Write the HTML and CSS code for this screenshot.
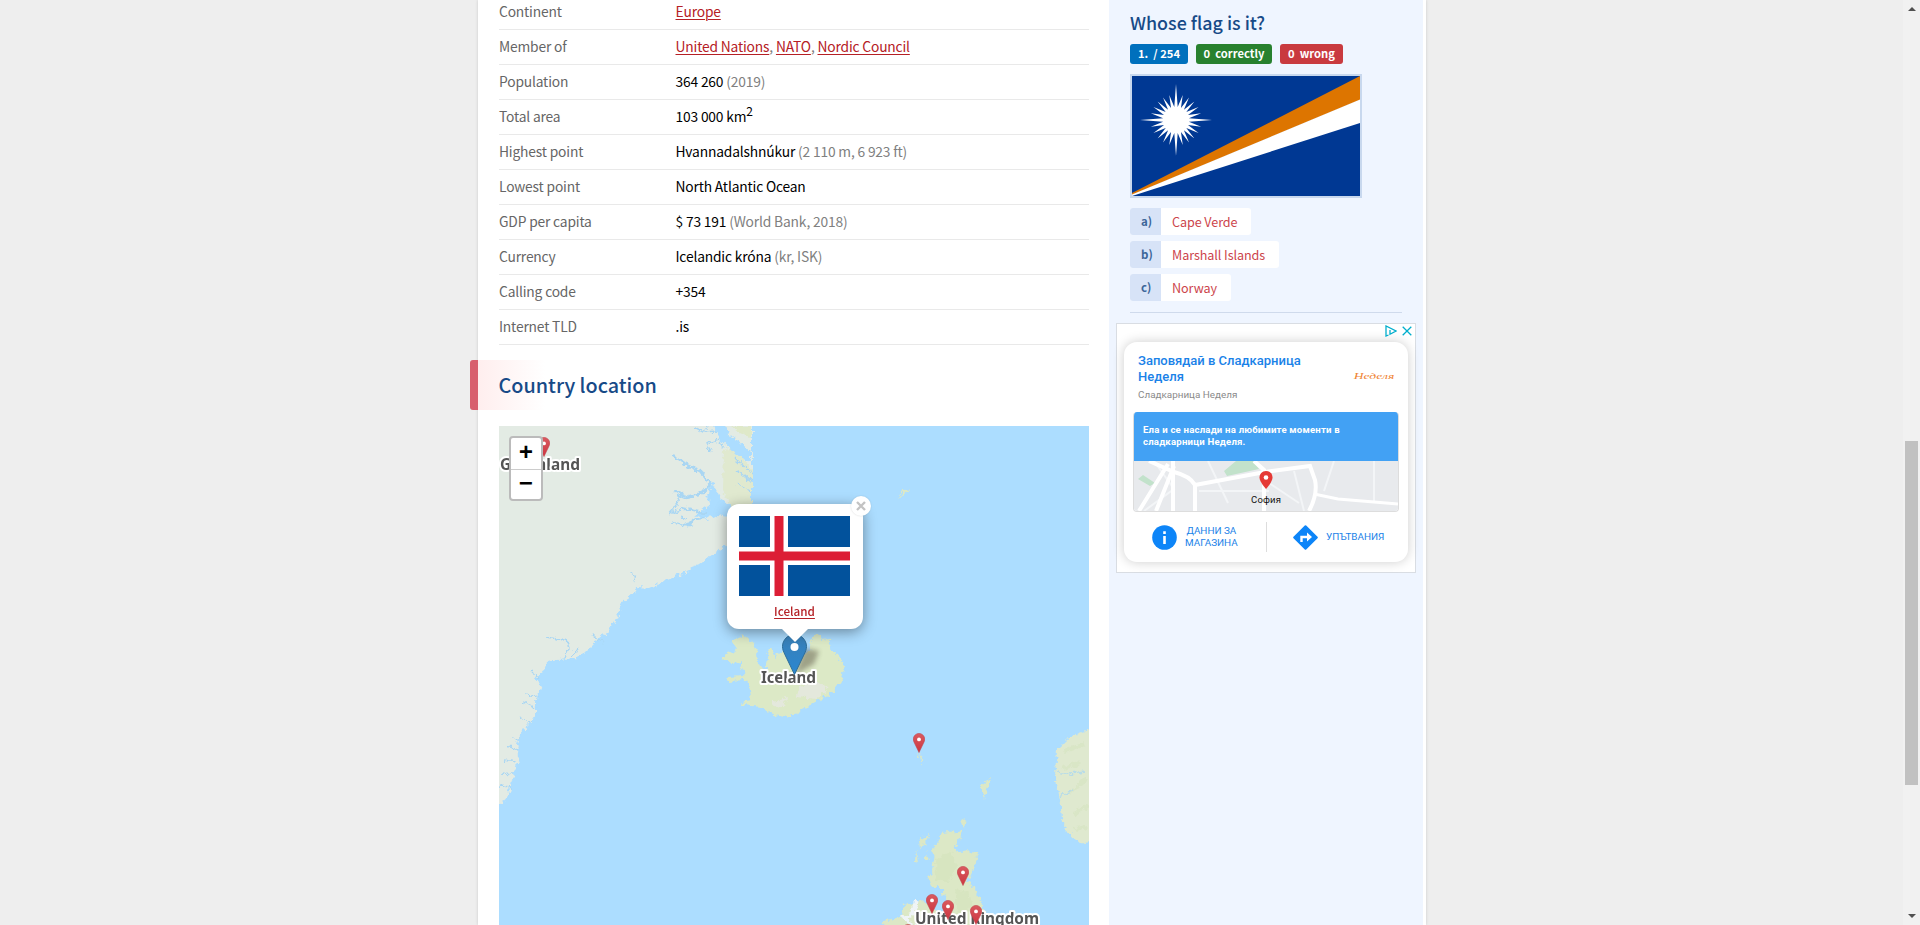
FILE: index.html
```html
<!DOCTYPE html>
<html lang="en">
<head>
<meta charset="utf-8">
<title>Iceland - country facts</title>
<link rel="stylesheet" href="styles.css">
</head>
<body>
<svg class="defs" width="0" height="0" aria-hidden="true">
  <defs>
    <linearGradient id="redpin" x1="0" y1="0" x2="0" y2="1"><stop offset="0" stop-color="#d95a60"/><stop offset="1" stop-color="#cc3540"/></linearGradient>
    <linearGradient id="bluepin" x1="0" y1="0" x2="0" y2="1"><stop offset="0" stop-color="#3a7fb5"/><stop offset="1" stop-color="#2a87d2"/></linearGradient>
    <symbol id="pin" viewBox="0 0 25 41"><path d="M12.5.5C5.9.5.5 5.9.5 12.5c0 2.8.9 4.8 2.2 7.6L12.5 40.5l9.8-20.4c1.300-2.800 2.200-4.800 2.200-7.600C24.500 5.900 19.100.5 12.500.5z"/><circle cx="12.500" cy="13" r="4" fill="#fff" stroke="none"/></symbol>
    <filter id="coast" x="-5%" y="-5%" width="110%" height="110%" color-interpolation-filters="sRGB"><feTurbulence type="fractalNoise" baseFrequency=".2" numOctaves="3" seed="4" result="n"/><feDisplacementMap in="SourceGraphic" in2="n" scale="8" xChannelSelector="R" yChannelSelector="G"/></filter>
    <filter id="shade" x="-40%" y="-40%" width="180%" height="180%"><feGaussianBlur stdDeviation="2.500"/></filter>
  </defs>
</svg>
<div class="window">
<div class="page">
  <main class="main">
    <dl class="facts">
      <div class="row"><dt>Continent</dt><dd><a>Europe</a></dd></div>
      <div class="row"><dt>Member of</dt><dd class="muted"><a>United Nations</a>, <a>NATO</a>, <a>Nordic Council</a></dd></div>
      <div class="row"><dt>Population</dt><dd>364 260 <span>(2019)</span></dd></div>
      <div class="row"><dt>Total area</dt><dd>103 000 km<sup>2</sup></dd></div>
      <div class="row"><dt>Highest point</dt><dd>Hvannadalshnúkur <span>(2 110 m, 6 923 ft)</span></dd></div>
      <div class="row"><dt>Lowest point</dt><dd>North Atlantic Ocean</dd></div>
      <div class="row"><dt>GDP per capita</dt><dd>$ 73 191 <span>(World Bank, 2018)</span></dd></div>
      <div class="row"><dt>Currency</dt><dd>Icelandic króna <span>(kr, ISK)</span></dd></div>
      <div class="row"><dt>Calling code</dt><dd>+354</dd></div>
      <div class="row"><dt>Internet TLD</dt><dd>.is</dd></div>
    </dl>
    <h2 class="section">Country location</h2>
    <div class="map">
      <svg class="tiles" viewBox="499 426 590 499">
        <rect x="499" y="426" width="590" height="499" fill="#acddff"/>
        <g filter="url(#coast)">
          <path fill="#e3ebe4" d="M480 410H752V516L727 545 705 560 690 570 663 582 650 588 638 587 633 594 622 603 617 618 607 633 593 643 578 658 565 659 547 662 543 673 535 678 541 688 536 700 536 715 520 735 517 743 519 757 512 780 507 798 499 804 480 810z"/>
          <path fill="#dfe9c9" opacity=".8" d="M723 450L735 448 752 470V516H738L722 490z"/>
          <path fill="#dfe9c9" d="M732 426H751V438L742 433z"/>
          <path fill="#acddff" d="M714 420L718 438 736 455 751 463V452L744 446 728 434 724 420zM710 483L716 486 722 500 732 505 728 517 718 515 706 519 696 514 710 505 708 494z"/>
          <g fill="none" stroke="#a9d6f3" stroke-width="1.400">
            <path d="M673 455L684 464 700 471 710 484M710 484L702 493 686 497 675 492M706 514L690 510 680 508M704 518L693 519 687 527" stroke-width="2.600"/>
            <path d="M684 464L678 458M681 494L677 504 669 514M682 509L670 513M692 526L672 522M687 519L680 517M694 427L704 432 717 431M704 432L708 425M718 440L706 444 711 452M718 440L724 448M738 470L752 482M738 484L752 492M735 458L752 474M632 572L635 582M567 640L569 650 566 658M547 637L569 641M578 648L571 657M593 634L603 643M532 672L540 678M526 695L538 698M523 702L536 708M521 718L530 723M510 737L519 738M508 746L518 750M504 760L516 762M502 773L514 774M500 786L511 787"/>
          </g>
          <path fill="#dce9c6" d="M736 637L743 635 753 643 757 653 758 663 765 672 768 650 771 647 775 657 782 650 791 660 810 652 812 638 817 633 822 640 833 638 828 647 838 655 844 667 842 680 833 692 810 705 797 713 787 717 773 715 762 707 742 705 743 701 752 700 750 690 747 680 726 681 727 677 744 676 745 670 740 669 743 662 730 663 722 660 725 655 737 650 732 643z"/>
          <path fill="#e5e8df" opacity=".85" d="M800 686L818 681 828 687 817 699 796 697zM772 702L786 698 784 707 775 708z"/>
          <path fill="#dce8c6" d="M942 833L964 830 960 838 955 847 958 852 977 851 978 855 972 873 967 882 975 887 981 900 985 913 992 930 940 930 950 913 948 900 943 893 943 887 932 887 928 877 932 873 933 863 935 857 932 850 938 843zM903 905L914 902 924 900 934 908 940 920 938 930 882 930 886 920 903 917 902 910z"/>
          <path fill="#d4e3bd" opacity=".65" d="M935 860L950 850 957 866 948 882 936 880zM955 890L968 892 973 908 958 913z"/>
          <path fill="#dce8c6" d="M919 840L929 833 926 844 920 848zM916 850L918 862 915 861zM925 852L930 860 925 860zM961 820L968 819 964 827zM981 786L991 779 986 792 984 800 981 793zM919 752L922 758 922 765zM897 498L904 490 910 489 903 495z"/>
          <path fill="#dfe9cf" d="M1100 726L1080 732 1067 740 1057 750 1055 773 1060 800 1063 817 1065 830 1077 840 1085 844 1100 841z"/>
          <path fill="none" stroke="#d3e4bd" stroke-width="4" opacity=".5" d="M1064 751L1084 744M1064 768L1080 762M1070 794L1087 777M1073 815L1088 805M1075 830L1087 827"/>
          <path fill="none" stroke="#b8dce8" stroke-width="1.500" d="M1057 772L1070 774 1086 772M1060 796L1074 790"/>
          <path fill="none" stroke="#eff4f7" stroke-width="3" d="M915 900L913 914 904 918 914 925"/>
        </g>
        <path filter="url(#shade)" fill="#4a4030" opacity=".42" d="M795 675L804 648 819 651 814 664z"/>
        <g class="place">
          <text x="500" y="470" textLength="80">Greenland</text>
          <text x="761" y="683" textLength="55">Iceland</text>
          <text x="915" y="924" textLength="124">United Kingdom</text>
        </g>
        <g fill="url(#redpin)" stroke="#bd3e48">
          <use href="#pin" x="538" y="437" width="12" height="20"/>
          <use href="#pin" x="913" y="733" width="12" height="20"/>
          <use href="#pin" x="957" y="866" width="12" height="20"/>
          <use href="#pin" x="926" y="894" width="12" height="20"/>
          <use href="#pin" x="942" y="900" width="12" height="20"/>
          <use href="#pin" x="970" y="905" width="12" height="20"/>
          <use href="#pin" x="902" y="924" width="12" height="20"/>
        </g>
        <use href="#pin" x="782" y="634" width="25" height="41" fill="url(#bluepin)" stroke="#2e6c97"/>
      </svg>
      <div class="zoomctl"><span>+</span><span>−</span></div>
      <div class="popup">
        <svg class="iceflag" viewBox="0 0 111 80"><path fill="#02529c" d="M0 0h111v80H0z"/><path stroke="#fff" stroke-width="18" d="M40 0v80M0 40h111"/><path stroke="#dc1e35" stroke-width="9" d="M40 0v80M0 40h111"/></svg>
        <a>Iceland</a>
        <span class="close"><svg width="10" height="10" viewBox="0 0 10 10"><path d="M1 1l8 8M9 1L1 9" stroke="#c3c3c3" stroke-width="2.400"/></svg></span>
      </div>
    </div>
  </main>
  <aside class="side">
    <h3>Whose flag is it?</h3>
    <div class="score"><b class="b1">1.&nbsp; / 254</b><b class="b2">0&nbsp; correctly</b><b class="b3">0&nbsp; wrong</b></div>
    <svg class="quizflag" viewBox="0 0 228 120"><path fill="#003893" d="M0 0h228v120H0z"/><path fill="#dd7500" d="M0 117L228 0v24L0 119z"/><path fill="#fff" d="M0 118.500L228 23.500V47L0 120z"/><path class="star" fill="#fff" d=""/></svg>
    <ul class="answers">
      <li class="a1"><i>a)</i><span>Cape Verde</span></li>
      <li class="a2"><i>b)</i><span>Marshall Islands</span></li>
      <li class="a3"><i>c)</i><span>Norway</span></li>
    </ul>
    <div class="ad">
      <div class="adchoices">
        <svg width="12" height="12" viewBox="0 0 12 12" fill="none" stroke="#00aecd" stroke-width="1.300"><path d="M3.500 10L1 11V1l10 5-6 3.200V5M5 2.800v1.200"/></svg>
        <svg width="10" height="10" viewBox="0 0 10 10" stroke="#00aecd" stroke-width="1.300"><path d="M.7.7l8.600 8.600M9.300.7L.7 9.300"/></svg>
      </div>
      <div class="card">
        <div class="cardhead">
          <div><h4>Заповядай в Сладкарница<br>Неделя</h4><p>Сладкарница Неделя</p></div>
          <em>Неделя</em>
        </div>
        <div class="promo">
          <p>Ела и се наслади на любимите моменти в<br>сладкарници Неделя.</p>
          <svg width="264" height="50" viewBox="0 0 264 50"><path fill="#e8eaed" d="M0 0h264v50H0z"/><path fill="#c2e2cb" d="M90 10L102 0h17l6 8-32 7zM4 18l5-4 12 8-5 3z"/><g fill="none" stroke="#f3f5f7"><path stroke-width="2" d="M20 0l20 28-30 22M74 0l20 42M135 22l30 20M160 10l10 40M200 0l-10 30M240 0v42M65 30h70"/></g><g fill="none" stroke="#fff"><path stroke-width="4" d="M5 50L34 3M22 50L40 5M39 0v50M15 0l25 11q16 4 21 13v26M61 24l70-13 45-6 5 14q3 14-6 31M120 0l10 9v41"/><path stroke-width="3" d="M180 33l24 5 60 5"/></g><path fill="#e53935" d="M132 10c-4 0-6.500 3-6.500 6.500 0 4.500 6.500 11.500 6.500 11.500s6.500-7 6.500-11.500C138.500 13 136 10 132 10z"/><circle cx="132" cy="16.500" r="2.300" fill="#fff"/><text x="117" y="42" textLength="30" class="city">София</text></svg>
        </div>
        <div class="actions">
          <div class="act act1"><svg width="25" height="25" viewBox="0 0 25 25"><circle cx="12.500" cy="12.500" r="12.300" fill="#0d85f8"/><path stroke="#fff" stroke-width="2.600" d="M12.500 11v8M12.500 6.300v2.600"/></svg><span>ДАННИ ЗА<br>МАГАЗИНА</span></div>
          <div class="act act2"><svg width="25" height="25" viewBox="0 0 25 25"><path fill="#0d85f8" stroke="#0d85f8" stroke-width="2" stroke-linejoin="round" d="M12.500 1.200L23.800 12.500 12.500 23.800 1.200 12.500z"/><path fill="none" stroke="#fff" stroke-width="2.400" d="M8.500 17v-5h6"/><path fill="#fff" d="M14 7.500l5 4.500-5 4.500z"/></svg><span>УПЪТВАНИЯ</span></div>
        </div>
      </div>
    </div>
  </aside>
</div>
<div class="scrollbar"><svg width="8" height="4" viewBox="0 0 8 4"><path fill="#505050" d="M4 0l4 4H0z"/></svg><div class="thumb"></div><svg class="down" width="8" height="4" viewBox="0 0 8 4"><path fill="#505050" d="M0 0h8L4 4z"/></svg></div>
</div>
<script>
// Star of the quiz flag: 24 rays, the four on the axes are longer.
var d = "";
for (var k = 0; k < 24; k++) {
  var a = k * Math.PI / 12, r = k % 6 === 0 ? 36 : 26, h = Math.PI / 24;
  d += (k ? "L" : "M") + (44 + r * Math.cos(a)).toFixed(2) + " " + (44 + r * Math.sin(a)).toFixed(2) +
       "L" + (44 + 13 * Math.cos(a + h)).toFixed(2) + " " + (44 + 13 * Math.sin(a + h)).toFixed(2);
}
document.querySelector(".star").setAttribute("d", d + "z");
</script>
</body>
</html>
```
FILE: styles.css
```css
* { box-sizing: border-box; }
html, body { margin: 0; height: 925px; overflow: hidden; background: #eee; }
body { font: 13.8px/20px "Noto Sans CJK SC", "Noto Sans", sans-serif; color: #000; }
h2, h3, h4, p, dl, dd, ul { margin: 0; padding: 0; }
.defs { position: absolute; }
.window { display: flex; height: 925px; padding-left: 478px; justify-content: space-between; }
.page { display: flex; width: 948px; height: 925px; background: #fff; box-shadow: 0 0 3px rgba(0,0,0,.15); }
.main { width: 631px; padding-left: 20px; }
.facts { width: 590px; margin-left: 1px; letter-spacing: -.17px; }
.row { display: flex; height: 35px; padding-top: 6px; border-bottom: 1px solid #e9e9e9; line-height: 20px; white-space: pre; }
.row:first-child { height: 30px; padding-top: 1px; }
.row dt { width: 176.500px; color: #666; }
.row span, .muted { color: #808080; }
.row a, .popup a { color: #b52025; text-decoration: underline; text-underline-offset: 1.500px; text-decoration-thickness: 1px; }
sup { font-size: 12px; line-height: 0; vertical-align: 6px; }
.section { width: 300px; height: 50px; margin: 15px 0 16px -28px; padding-left: 28.500px; border-radius: 3px 0 0 3px; background: linear-gradient(90deg, #d85f6d 8px, #ffeeee 8px, #fff 75px); font-size: 19.800px; font-weight: 500; line-height: 49px; color: #174a87; }
.map { position: relative; width: 590px; height: 499px; margin-left: 1px; }
.tiles { display: block; width: 590px; height: 499px; }
.place text { font: 700 15.500px "Noto Sans", sans-serif; fill: #555; stroke: #fff; stroke-width: 4px; stroke-linejoin: round; paint-order: stroke; }
.zoomctl { position: absolute; left: 10px; top: 10px; display: flex; flex-direction: column; width: 34px; height: 65px; border: 2px solid #bbb; border-radius: 4px; background: #fff; }
.zoomctl span { height: 31px; text-align: center; font: bold 24px/32px "Liberation Mono", monospace; }
.zoomctl span + span { border-top: 1px solid #ccc; line-height: 29px; }
.popup { position: absolute; left: 228px; top: 78px; display: flex; flex-direction: column; align-items: center; gap: 5px; width: 136px; height: 125px; padding: 12px 1px 0 0; border-radius: 12px; background: #fff; box-shadow: 0 3px 14px rgba(0,0,0,.4); font-size: 11.700px; font-weight: 500; }
.popup::after { content: ""; position: absolute; left: 54px; top: 124px; width: 28px; height: 14px; background: #fff; clip-path: polygon(0 0, 100% 0, 50% 100%); }
.iceflag { width: 111px; height: 80px; }
.close { position: absolute; right: -8px; top: -8px; display: flex; align-items: center; justify-content: center; width: 20px; height: 20px; border-radius: 50%; background: #fff; box-shadow: 0 0 2px rgba(0,0,0,.15); }
.side { width: 314px; padding: 10px 0 0 21px; background: #eff5ff; }
.side h3 { height: 24px; font-size: 17.900px; font-weight: 500; line-height: 24px; color: #174a87; }
.score { display: flex; gap: 8px; margin-top: 10px; }
.score b { height: 20px; border-radius: 3px; font-size: 11.200px; line-height: 19px; text-align: center; color: #fff; white-space: pre; }
.b1 { width: 58px; background: #0070bd; }
.b2 { width: 76px; background: #28812f; }
.b3 { width: 63px; background: #c93a3f; }
.quizflag { display: block; width: 232px; height: 124px; margin-top: 10px; border: 2px solid #c8d8ee; }
.answers { display: flex; flex-direction: column; gap: 6px; width: 272px; height: 105px; margin-top: 10px; border-bottom: 1px solid #cfdaec; list-style: none; }
.answers li { display: flex; height: 27px; border-radius: 3px; background: #fff; overflow: hidden; font-size: 12.600px; line-height: 27px; color: #cc444b; }
.answers i { width: 31px; padding-left: 11px; background: #d7e3f7; font-style: normal; font-weight: 700; font-size: 11.500px; line-height: 26px; color: #3c6699; }
.answers span { padding-left: 11px; letter-spacing: -.08px; }
.a1 { width: 121px; } .a2 { width: 149px; } .a3 { width: 101px; }
.ad { width: 300px; height: 250px; margin: 10px 0 0 -14px; padding: 1px 7px; border: 1px solid #d9dde3; background: #fff; font-family: Roboto, sans-serif; }
.adchoices { display: flex; align-items: center; justify-content: flex-end; gap: 5px; height: 12px; margin-right: -4px; }
.card { height: 220px; margin-top: 5px; padding: 11px 9px 0; border-radius: 13px; background: #fff; box-shadow: 0 0 12px rgba(0,0,0,.2); }
.cardhead { display: flex; justify-content: space-between; height: 59px; padding: 0 5px; }
.cardhead h4 { font-size: 13px; line-height: 16px; font-weight: 500; color: #1a82e8; white-space: nowrap; }
.cardhead p { margin-top: 3px; font-size: 9.900px; line-height: 13px; color: #8a8a8a; }
.cardhead em { height: 20px; margin-top: 13px; font: italic 8.500px/20px "Liberation Serif", serif; color: #f08332; transform: scaleX(1.600); transform-origin: right; }
.promo { height: 100px; border: 1px solid #ddd; border-top: 0; border-radius: 4px; overflow: hidden; }
.promo p { height: 49px; padding: 12px 9px 0; background: #42a1f4; font-size: 9.600px; font-weight: 700; letter-spacing: .2px; line-height: 12px; color: #fff; white-space: nowrap; }
.promo svg { display: block; }
.city { font: 9.500px Roboto, sans-serif; fill: #111; }
.actions { display: flex; height: 50px; align-items: center; }
.act { display: flex; align-items: center; height: 30px; gap: 8px; font-size: 9.900px; line-height: 12px; color: #1a82e8; text-align: center; white-space: nowrap; }
.act1 { width: 134px; padding-left: 19px; border-right: 1px solid #ddd; }
.act2 { padding-left: 26px; }
.scrollbar { display: flex; flex-direction: column; align-items: center; width: 17px; height: 925px; padding: 7px 0; background: #f1f1f1; }
.thumb { width: 13px; height: 344px; margin-top: 430px; background: #c1c1c1; }
.down { margin-top: auto; }
```
